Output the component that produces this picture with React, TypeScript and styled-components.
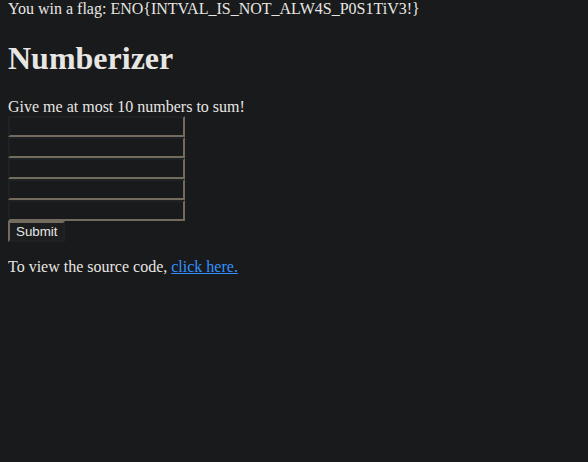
import React from "react";
import styled, { createGlobalStyle } from "styled-components";

const GlobalStyle = createGlobalStyle`
  html, body {
    background: #181a1b;
  }
  body {
    margin: 0 8px 8px;
    color: #e8e6e3;
    font-family: "Liberation Serif", "Times New Roman", serif;
    font-size: 16px;
  }
`;

const App = () => {
  return (
    <>
      <GlobalStyle />
      <Flag>You win a flag: ENO{"{"}INTVAL_IS_NOT_ALW4S_P0S1TiV3!{"}"}</Flag>
      <Title>Numberizer</Title>
      <Prompt>Give me at most 10 numbers to sum!</Prompt>
      <Form onSubmit={(e) => e.preventDefault()}>
        {[0, 1, 2, 3, 4].map((i) => (
          <NumberInput key={i} name="numbers[]" type="text" />
        ))}
        <SubmitButton type="submit">Submit</SubmitButton>
      </Form>
      <Footer>
        To view the source code, <SourceLink href="#">click here.</SourceLink>
      </Footer>
    </>
  );
};

export default App;

const Flag = styled.div`
  line-height: 18.4px;
`;

const Title = styled.h1`
  font-size: 32px;
  font-weight: bold;
  margin: 21.44px 0;
  line-height: 36.8px;
`;

const Prompt = styled.div`
  line-height: 18.4px;
`;

const Form = styled.form`
  display: flex;
  flex-direction: column;
  align-items: flex-start;
`;

const NumberInput = styled.input`
  box-sizing: border-box;
  width: 177px;
  height: 21px;
  margin: 0;
  padding: 1px 2px;
  background: #181a1b;
  color: #e8e6e3;
  font-family: "Liberation Sans", Arial, sans-serif;
  font-size: 13.33px;
  border-style: solid;
  border-width: 2px;
  border-color: #1f2224 #736b5e #736b5e #1f2224;
  outline: none;
`;

const SubmitButton = styled.button`
  box-sizing: border-box;
  width: 57px;
  height: 21px;
  margin: 0;
  padding: 1px 6px;
  background: #1b1d1e;
  color: #e8e6e3;
  font-family: "Liberation Sans", Arial, sans-serif;
  font-size: 13.33px;
  border-style: solid;
  border-width: 2px;
  border-color: #736b5e #1f2224 #1f2224 #736b5e;
  cursor: pointer;
`;

const Footer = styled.p`
  margin: 16px 0;
  line-height: 18.4px;
`;

const SourceLink = styled.a`
  color: #3391ff;
  text-decoration: underline;
`;
